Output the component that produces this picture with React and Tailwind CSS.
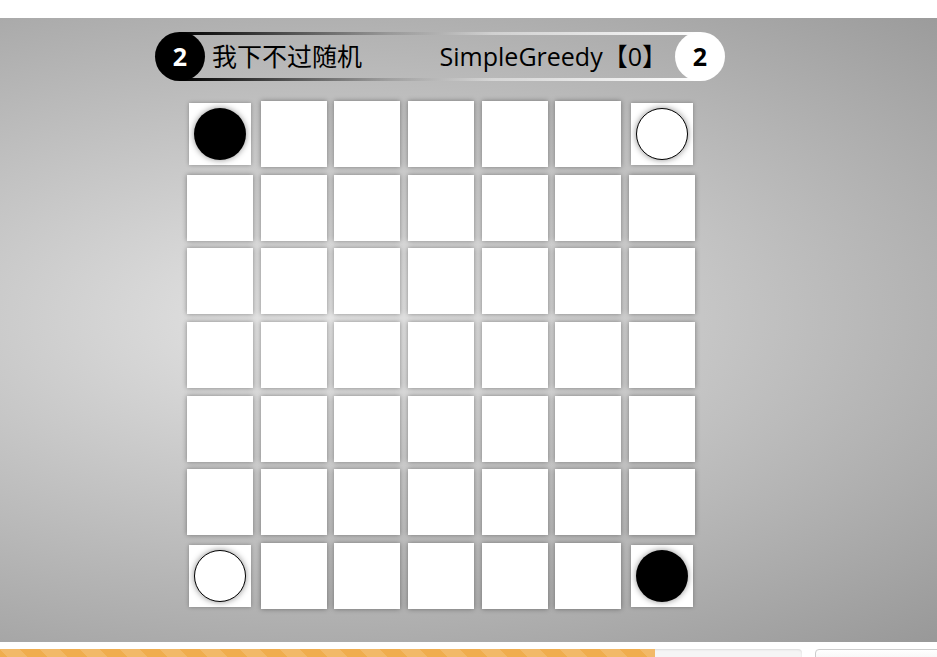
import React from "react";

const SIZE = 7;

// starting position: corners only
const pieceAt = (r, c) => {
  if (r === 0 && c === 0) return "black";
  if (r === 0 && c === SIZE - 1) return "white";
  if (r === SIZE - 1 && c === 0) return "white";
  if (r === SIZE - 1 && c === SIZE - 1) return "black";
  return null;
};

function Cell({ piece }) {
  if (!piece) {
    return <div className="w-[66px] h-[66px] bg-white shadow-[0_0_5px_rgba(0,0,0,0.4)]" />;
  }
  return (
    <div className="w-[66px] h-[66px] flex items-center justify-center">
      <div className="w-[62px] h-[62px] bg-white shadow-[0_0_4px_rgba(0,0,0,0.3)] flex items-center justify-center">
        {piece === "black" ? (
          <div className="w-[52px] h-[52px] rounded-full bg-black shadow-[0_0_6px_rgba(0,0,0,0.45)]" />
        ) : (
          <div className="w-[52px] h-[52px] rounded-full bg-white border border-black shadow-[0_0_6px_rgba(0,0,0,0.45)]" />
        )}
      </div>
    </div>
  );
}

function ScoreBar() {
  return (
    <div className="ml-[155px] w-[570px] h-[49px] flex items-stretch font-['Open_Sans','Noto_Sans_CJK_SC',sans-serif]">
      {/* black side */}
      <div className="relative z-10 w-[50px] h-[49px] shrink-0 rounded-full bg-black flex items-center justify-center text-white text-[25px] font-bold">
        2
      </div>
      <div className="flex-1 -mx-[25px] border-y-[3px] [border-image:linear-gradient(to_right,#000,rgba(0,0,0,0.15)_40%,rgba(255,255,255,0)_50%,rgba(255,255,255,0.4)_60%,#fff)_1] flex items-center justify-between pl-[32px] pr-[33px] text-[25px] text-black leading-none">
        <span>我下不过随机</span>
        <span>SimpleGreedy【0】</span>
      </div>
      {/* white side */}
      <div className="relative z-10 w-[50px] h-[49px] shrink-0 rounded-full bg-white flex items-center justify-center text-black text-[25px] font-bold">
        2
      </div>
    </div>
  );
}

export default function App() {
  const rows = Array.from({ length: SIZE }, (_, r) => r);
  const cols = Array.from({ length: SIZE }, (_, c) => c);

  return (
    <div className="w-[937px] h-[657px] bg-white overflow-hidden flex flex-col">
      <div className="h-[18px] shrink-0" />

      {/* game area */}
      <div className="h-[624px] shrink-0 flex flex-col bg-[radial-gradient(ellipse_920px_430px_at_320px_300px,#e6e6e6,#999999)]">
        <div className="h-[14px] shrink-0" />
        <ScoreBar />

        <div className="mt-[20px] ml-[187px] grid grid-cols-[repeat(7,66px)] gap-[7.66px]">
          {rows.map((r) =>
            cols.map((c) => <Cell key={`${r}-${c}`} piece={pieceAt(r, c)} />)
          )}
        </div>
      </div>

      <div className="h-[7px] shrink-0" />

      {/* bottom controls */}
      <div className="flex items-start">
        <div className="w-[802px] h-[20px] shrink-0 rounded-r-[4px] bg-[#f5f5f5] shadow-[inset_0_1px_2px_rgba(0,0,0,0.1)] overflow-hidden">
          <div className="w-[655px] h-full bg-[#f0ad4e] bg-[linear-gradient(45deg,rgba(255,255,255,.15)_25%,transparent_25%,transparent_50%,rgba(255,255,255,.15)_50%,rgba(255,255,255,.15)_75%,transparent_75%,transparent)] bg-[length:40px_40px]" />
        </div>
        <div className="ml-[13px] w-[160px] h-[34px] shrink-0 rounded-[4px] border border-[#ccc] bg-[linear-gradient(to_bottom,#fff,#e0e0e0)]" />
      </div>
    </div>
  );
}
